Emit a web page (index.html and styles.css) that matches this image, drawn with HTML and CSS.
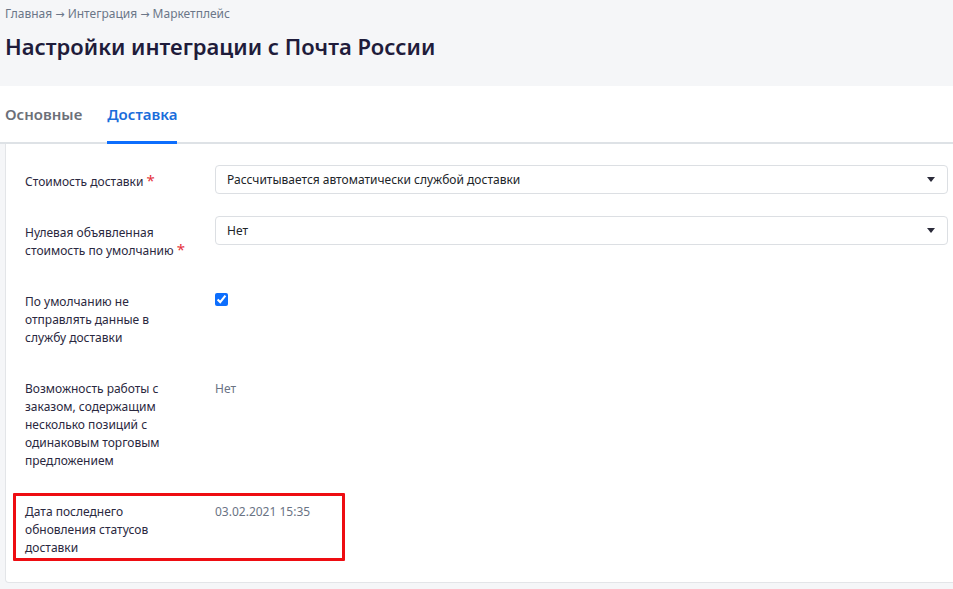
FILE: index.html
```html
<!DOCTYPE html>
<html lang="ru">
    <head>
        <meta charset="utf-8">
        <title>Настройки интеграции с Почта России</title>
        <link rel="stylesheet" href="styles.css">
    </head>
    <body>
        <header class="page-header">
            <nav class="breadcrumbs">
                <a href="#">Главная</a> <span class="sep">→</span> <a href="#">Интеграция</a> <span class="sep">→</span> <a href="#">Маркетплейс</a>
            </nav>
            <h1>Настройки интеграции с Почта России</h1>
        </header>

        <ul class="tabs">
            <li><a href="#">Основные</a></li>
            <li class="active"><a href="#">Доставка</a></li>
        </ul>

        <section class="card">
            <div class="form-row">
                <label class="form-label">Стоимость доставки <span class="req">*</span></label>
                <div class="select">
                    <span>Рассчитывается автоматически службой доставки</span>
                    <i class="caret"></i>
                </div>
            </div>

            <div class="form-row">
                <label class="form-label">Нулевая объявленная стоимость по умолчанию <span class="req">*</span></label>
                <div class="select">
                    <span>Нет</span>
                    <i class="caret"></i>
                </div>
            </div>

            <div class="form-row">
                <label class="form-label" for="noSend">По умолчанию не отправлять данные в службу доставки</label>
                <div class="form-check">
                    <input type="checkbox" id="noSend" checked>
                </div>
            </div>

            <div class="form-row">
                <span class="form-label">Возможность работы с заказом, содержащим несколько позиций с одинаковым торговым предложением</span>
                <span class="form-value">Нет</span>
            </div>

            <div class="form-row marked">
                <span class="form-label">Дата последнего обновления статусов доставки</span>
                <span class="form-value">03.02.2021 15:35</span>
            </div>
        </section>
    </body>
</html>
```

FILE: styles.css
```css
html, body {
    margin: 0;
    padding: 0;
}

body {
    background: #f5f6f8;
    font-family: "Noto Sans", "Open Sans", sans-serif;
    font-size: 12px;
    color: #2a2840;
    overflow-x: hidden;
}

a {
    color: inherit;
    text-decoration: none;
}

.page-header {
    height: 86px;
    padding: 0 5px;
    box-sizing: border-box;
}

.breadcrumbs {
    padding-top: 6px;
    font-size: 12px;
    line-height: 16px;
    color: #6b7688;
}

.breadcrumbs .sep {
    font-family: "DejaVu Sans", sans-serif;
    font-size: 11px;
}

.page-header h1 {
    margin: 8px 0 0;
    font-size: 22px;
    line-height: 30px;
    font-weight: 600;
    color: #1f1c3b;
}

.tabs {
    display: flex;
    gap: 25px;
    margin: 0;
    padding: 0 5px;
    list-style: none;
    background: #fff;
    border-bottom: 2px solid #dee2e6;
}

.tabs li {
    margin-bottom: -2px;
}

.tabs a {
    display: block;
    padding: 17px 0 16px;
    font-size: 15px;
    line-height: 22px;
    font-weight: 600;
    color: #6c7078;
    border-bottom: 3px solid transparent;
}

.tabs .active a {
    color: #1a6ddb;
    border-bottom-color: #0d6efd;
}

.card {
    margin: 0 -15px 0 5px;
    padding: 22px 19px 18px;
    background: #fff;
    border: 1px solid #e3e5e8;
    border-top: 0;
    border-radius: 0 0 4px 4px;
}

.form-row {
    display: grid;
    grid-template-columns: 190px 1fr;
    align-items: start;
    margin-bottom: 19px;
}

.form-row:last-child {
    margin-bottom: 0;
}

.form-label {
    max-width: 165px;
    padding: 7px 0;
    line-height: 18px;
}

.req {
    color: #e5333d;
    font-size: 15px;
    line-height: 1;
}

.form-value {
    padding: 7px 0;
    line-height: 18px;
    color: #6a7384;
}

.select {
    display: flex;
    align-items: center;
    justify-content: space-between;
    height: 29px;
    margin-top: -1px;
    padding: 0 12px 0 11px;
    box-sizing: border-box;
    border: 1px solid #dcdfe3;
    border-radius: 4px;
    color: #212529;
}

.caret {
    width: 0;
    height: 0;
    border-left: 4px solid transparent;
    border-right: 4px solid transparent;
    border-top: 5px solid #2b2b3a;
}

.form-check {
    padding-top: 7px;
}

.form-check input {
    display: block;
    width: 13px;
    height: 13px;
    margin: 0;
    accent-color: #0d6efd;
}

.marked {
    position: relative;
}

/* annotation frame drawn over the last row */
.marked::after {
    content: "";
    position: absolute;
    top: -3px;
    left: -12px;
    width: 332px;
    height: 68px;
    border: 3px solid #ee0d12;
    border-radius: 1px;
    box-sizing: border-box;
    pointer-events: none;
}
```
